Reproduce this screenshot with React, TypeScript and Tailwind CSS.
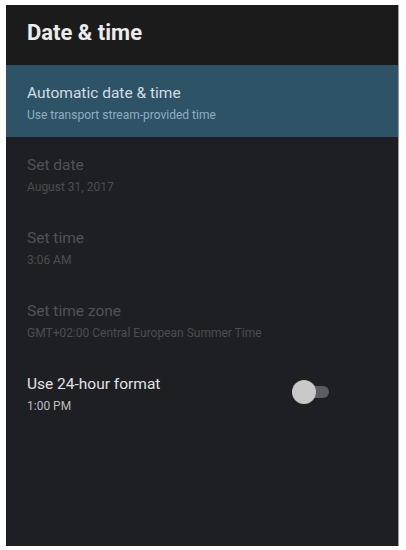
import { useState } from "react";

interface SettingRow {
    title: string;
    subtitle: string;
    disabled?: boolean;
}

const rows: SettingRow[] = [
    { title: "Set date", subtitle: "August 31, 2017", disabled: true },
    { title: "Set time", subtitle: "3:06 AM", disabled: true },
    { title: "Set time zone", subtitle: "GMT+02:00 Central European Summer Time", disabled: true },
];

function Row({ title, subtitle, disabled }: SettingRow) {
    return (
        <div className="h-[73px] pl-[27px] pt-[18px]">
            <p className={"text-[15.5px] leading-[20px] " + (disabled ? "text-[#505257]" : "text-[#e6e6e6]")}>{title}</p>
            <p className={"text-[12px] leading-[14px] mt-[5px] " + (disabled ? "text-[#4b4d52]" : "text-[#c9c9c9]")}>{subtitle}</p>
        </div>
    );
}

function App() {
    const [on, setOn] = useState(false);

    return (
        <div className="w-[406px] h-[550px] bg-white pt-[5px] pl-[6px]" style={{ fontFamily: "Roboto, 'Liberation Sans', sans-serif" }}>
            <div className="w-[393px] h-[541px] bg-[#1e1f24] border-r border-[#9a9a9a] flex flex-col">
                <div className="h-[60px] bg-[#1b1b1c] pl-[21px] pt-[15px]">
                    <h1 className="text-[22px] leading-[26px] font-bold text-[#ececec]">Date &amp; time</h1>
                </div>
                <div className="h-[72px] bg-[#2e5366] pl-[21px] pt-[18px]">
                    <p className="text-[15.5px] leading-[20px] text-[#d3dde2]">Automatic date &amp; time</p>
                    <p className="text-[12px] leading-[14px] mt-[5px] text-[#8fafbf]">Use transport stream-provided time</p>
                </div>
                <div className="-ml-[6px]">
                    {rows.map((r) => (
                        <Row key={r.title} {...r} />
                    ))}
                    <div className="h-[73px] pl-[27px] pt-[18px] flex justify-between pr-[66px]">
                        <div>
                            <p className="text-[15.5px] leading-[20px] text-[#e2e2e2]">Use 24-hour format</p>
                            <p className="text-[12px] leading-[14px] mt-[5px] text-[#bdbdbd]">1:00 PM</p>
                        </div>
                        <button className="relative w-[40px] h-[24px] mt-[6px]" onClick={() => setOn(!on)}>
                            <span className="absolute left-[10px] top-[6px] w-[27px] h-[12px] rounded-full bg-[#5c5d60]" />
                            <span className="absolute left-0 top-0 w-[24px] h-[24px] rounded-full bg-[#c8c8c8]" />
                        </button>
                    </div>
                </div>
            </div>
        </div>
    );
}

export default App;
